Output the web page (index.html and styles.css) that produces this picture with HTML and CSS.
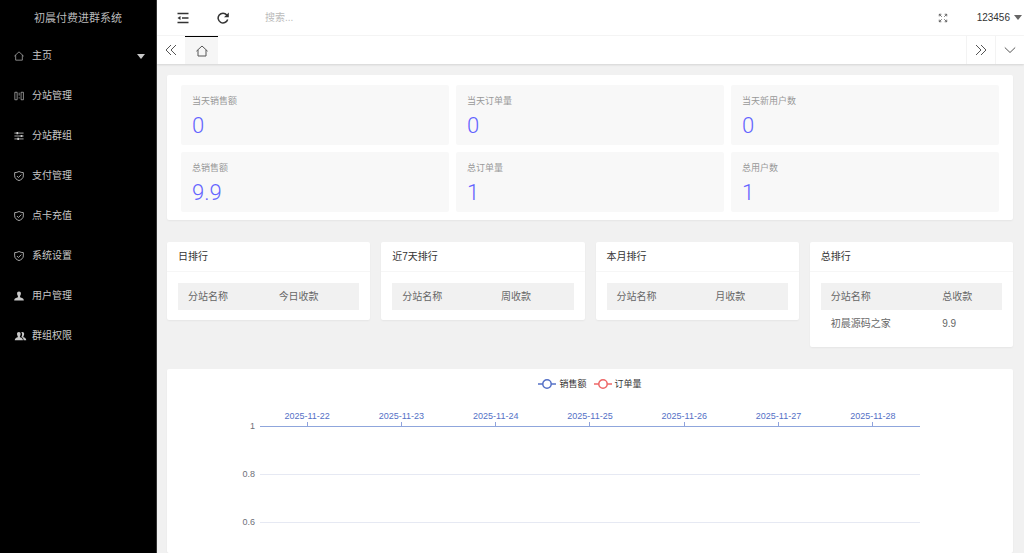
FILE: index.html
```html
<!DOCTYPE html>
<html lang="zh-CN">
<head>
<meta charset="utf-8">
<meta name="viewport" content="width=device-width, initial-scale=1">
<title>初晨付费进群系统</title>
<link rel="stylesheet" href="styles.css">
</head>
<body>
<svg class="defs" aria-hidden="true">
  <symbol id="home" viewBox="0 0 12 12"><path d="M.4 6.200 6 1l5.600 5.200M2 5V11h8V5"/></symbol>
  <symbol id="columns" viewBox="0 0 12 12"><path d="M1 1.500h2.800v9H1zM8.500 1.500h2.800v9H8.500zM6.200 2v3.500M6.200 7.500v1.500"/></symbol>
  <symbol id="sliders" viewBox="0 0 12 12"><path d="M.5 2.500h11M.5 6h11M.5 9.500h11"/><path class="solid" d="M3 1.200h2v2.600H3zM8 4.700h2v2.600H8zM4 8.200h2v2.600H4z"/></symbol>
  <symbol id="shield" viewBox="0 0 12 12"><path d="M6 .6c1.600 1 3.400 1.300 5.200 1.300v4c0 2.700-2.200 4.500-5.200 5.600C3 10.400.8 8.600.8 5.900v-4C2.600 1.900 4.400 1.600 6 .6zM3.500 6l1.800 1.800L8.800 4.300"/></symbol>
  <symbol id="user" viewBox="0 0 12 12"><path class="solid" d="M6 .5c1.600 0 2.300 1.100 2.300 2.500 0 1.300-.6 2.200-1 3v1.600c2 .6 4.500 1 4.500 3.700H.2C.2 8.600 2.700 8.200 4.700 7.600V6c-.4-.8-1-1.700-1-3C3.700 1.600 4.400.5 6 .5z"/></symbol>
  <symbol id="users" viewBox="0 0 14 12"><path class="solid" d="M5 1.200c1.500 0 2.200 1 2.200 2.400 0 1.200-.5 1.900-.9 2.600v1.200c1.700.5 3.600 1.100 3.600 3.800H.1C.1 8.500 2 7.900 3.700 7.400V6.200c-.4-.7-.9-1.400-.9-2.600 0-1.400.7-2.400 2.200-2.400zM8 1.600c.4-.3.800-.4 1.200-.4 1.500 0 2.200 1 2.200 2.400 0 1.200-.5 1.900-.9 2.600v1.200c1.700.5 3.400 1.100 3.400 3.800h-3.200c0-2.400-1-3.300-2.700-4 .5-.8.900-1.600.9-3.200 0-1-.3-1.700-.9-2.400z"/></symbol>
  <symbol id="fold" viewBox="0 0 12 12"><path d="M.5 1.500h11M5 6h6.500M.5 10.500h11"/><path class="solid" d="M3.500 4v4L.5 6z"/></symbol>
  <symbol id="reload" viewBox="0 0 12 12"><path d="M10.700 7.500A4.900 4.900 0 1 1 9.800 2.900"/><path class="solid" d="M11.800.5v4.800H7z"/></symbol>
  <symbol id="expand" viewBox="0 0 12 12"><path d="M1.500 4V1.500H4M1.500 1.500l3 3M8 1.500h2.500V4M10.500 1.500l-3 3M1.500 8v2.500H4M1.500 10.500l3-3M10.500 8v2.500H8M10.500 10.500l-3-3"/></symbol>
  <symbol id="left" viewBox="0 0 12 12"><path d="M6 1 1 6l5 5M11 1 6 6l5 5"/></symbol>
  <symbol id="right" viewBox="0 0 12 12"><path d="m1 1 5 5-5 5M6 1l5 5-5 5"/></symbol>
  <symbol id="down" viewBox="0 0 12 12"><path d="m.8 3.500 5.200 5 5.200-5"/></symbol>
  <symbol id="marker" viewBox="0 0 18 10"><path d="M0 5h18"/><circle cx="9" cy="5" r="4.200"/></symbol>
</svg>
<div class="app">
  <aside class="side">
    <h1 class="brand">初晨付费进群系统</h1>
    <nav class="menu">
      <a href="#"><svg class="icon thin"><use href="#home"/></svg>主页<span class="caret"></span></a>
      <a href="#"><svg class="icon thin"><use href="#columns"/></svg>分站管理</a>
      <a href="#"><svg class="icon"><use href="#sliders"/></svg>分站群组</a>
      <a href="#"><svg class="icon"><use href="#shield"/></svg>支付管理</a>
      <a href="#"><svg class="icon"><use href="#shield"/></svg>点卡充值</a>
      <a href="#"><svg class="icon"><use href="#shield"/></svg>系统设置</a>
      <a href="#"><svg class="icon"><use href="#user"/></svg>用户管理</a>
      <a href="#"><svg class="icon wide"><use href="#users"/></svg>群组权限</a>
    </nav>
  </aside>
  <div class="page">
    <header class="topbar">
      <button class="tool" aria-label="收起菜单"><svg class="icon bold"><use href="#fold"/></svg></button>
      <button class="tool" aria-label="刷新"><svg class="icon bold"><use href="#reload"/></svg></button>
      <input class="search" type="text" placeholder="搜索..." aria-label="搜索">
      <button class="tool expand" aria-label="全屏"><svg class="icon"><use href="#expand"/></svg></button>
      <button class="account">123456<span class="caret"></span></button>
    </header>
    <div class="tabs">
      <button class="tab-btn" aria-label="向左"><svg class="icon"><use href="#left"/></svg></button>
      <button class="tab active" aria-label="主页"><svg class="icon"><use href="#home"/></svg></button>
      <button class="tab-btn edge push" aria-label="向右"><svg class="icon"><use href="#right"/></svg></button>
      <button class="tab-btn edge" aria-label="更多"><svg class="icon"><use href="#down"/></svg></button>
    </div>
    <main class="main">
      <section class="card stats">
        <div class="stat"><h3>当天销售额</h3><p>0</p></div>
        <div class="stat"><h3>当天订单量</h3><p>0</p></div>
        <div class="stat"><h3>当天新用户数</h3><p>0</p></div>
        <div class="stat"><h3>总销售额</h3><p>9.9</p></div>
        <div class="stat"><h3>总订单量</h3><p>1</p></div>
        <div class="stat"><h3>总用户数</h3><p>1</p></div>
      </section>
      <div class="ranks">
        <section class="card rank">
          <h2>日排行</h2>
          <table><thead><tr><th>分站名称</th><th>今日收款</th></tr></thead></table>
        </section>
        <section class="card rank">
          <h2>近7天排行</h2>
          <table><thead><tr><th>分站名称</th><th>周收款</th></tr></thead></table>
        </section>
        <section class="card rank">
          <h2>本月排行</h2>
          <table><thead><tr><th>分站名称</th><th>月收款</th></tr></thead></table>
        </section>
        <section class="card rank">
          <h2>总排行</h2>
          <table><thead><tr><th>分站名称</th><th>总收款</th></tr></thead><tbody><tr><td>初晨源码之家</td><td>9.9</td></tr></tbody></table>
        </section>
      </div>
      <section class="card chart">
        <div class="legend">
          <span class="key sales"><svg class="marker"><use href="#marker"/></svg>销售额</span>
          <span class="key orders"><svg class="marker"><use href="#marker"/></svg>订单量</span>
        </div>
        <div class="dates">
          <span>2025-11-22</span><span>2025-11-23</span><span>2025-11-24</span><span>2025-11-25</span><span>2025-11-26</span><span>2025-11-27</span><span>2025-11-28</span>
        </div>
        <div class="scale">
          <div class="level top"><span>1</span><i></i></div>
          <div class="level"><span>0.8</span><i></i></div>
          <div class="level"><span>0.6</span><i></i></div>
        </div>
      </section>
    </main>
  </div>
</div>
</body>
</html>
```
FILE: styles.css
```css
* { box-sizing: border-box; }
body, h1, h2, h3, p { margin: 0; font-weight: 400; }
body {
  font: 10px/16px "Liberation Sans", "Noto Sans CJK SC", sans-serif;
  color: #333;
  background: #f1f1f1;
}
button, input {
  font: inherit;
  color: inherit;
  border: 0;
  padding: 0;
  background: none;
}
a { color: inherit; text-decoration: none; }
.defs { display: none; }

.icon {
  width: 12px;
  height: 12px;
  flex: none;
  fill: none;
  stroke: currentColor;
  stroke-width: 1;
}
.icon.bold { stroke-width: 1.5; }
.icon.thin { stroke-width: .8; }
.solid { fill: currentColor; stroke: none; }
.caret {
  border: 4px solid transparent;
  border-top: 5px solid currentColor;
  border-bottom: 0;
}

.app { display: flex; height: 100vh; overflow: hidden; }
.side { width: 157px; flex: none; background: #000; color: #c8c8c8; border-right: 1px solid #333; }
.brand { font-size: 11px; line-height: 36px; text-align: center; color: #bbb; }
.menu a {
  display: flex;
  align-items: center;
  gap: 8px;
  height: 40px;
  padding: 0 11px 0 14px;
}
.menu .icon { width: 10px; height: 10px; }
.menu .wide { width: 13px; margin-right: -3px; }
.menu .caret { margin-left: auto; }

.page { flex: 1; min-width: 0; display: flex; flex-direction: column; }
.topbar {
  display: flex;
  align-items: center;
  height: 36px;
  flex: none;
  padding: 0 2px 0 6px;
  background: #fff;
  border-bottom: 1px solid #f6f6f6;
}
.tool { width: 40px; height: 36px; display: grid; place-items: center; }
.search { flex: 1; min-width: 0; height: 36px; margin-left: 22px; outline: 0; }
.search::placeholder { color: #bbb; opacity: 1; }
.expand { color: #555; }
.expand .icon { width: 10px; height: 10px; }
.account { display: flex; align-items: center; gap: 4px; margin-left: 14px; }
.account .caret { color: #666; }

.tabs {
  display: flex;
  flex: none;
  height: 28px;
  margin-bottom: 1px;
  background: #fff;
  box-shadow: 0 1px 2px rgba(0, 0, 0, .12);
  color: #555;
}
.tabs button { display: grid; place-items: center; }
.tab-btn { width: 28px; }
.tab { width: 33px; }
.tab.active { background: #f6f6f6; border-top: 1px solid #000; }
.push { margin-left: auto; }
.tabs .edge { width: 29px; border-left: 1px solid #f3f3f3; }

.main { flex: 1; min-height: 0; display: flex; flex-direction: column; padding: 10px 11px 0 10px; }
.card { flex: none; background: #fff; border-radius: 2px; box-shadow: 0 1px 2px rgba(0, 0, 0, .05); }
.stats { display: grid; grid-template-columns: repeat(3, 1fr); gap: 7px; padding: 10px 14px 8px; }
.stat { padding: 8px 11px 2px; background: #f8f8f8; border-radius: 2px; }
.stat h3 { font-size: 9px; line-height: 16px; color: #999; }
.stat p { font: 300 22px/34px Roboto, "Liberation Sans", sans-serif; color: #6464ff; }

.ranks {
  display: grid;
  grid-template-columns: repeat(4, 1fr);
  align-items: start;
  gap: 11px;
  margin: 22px 0;
}
.rank { padding-bottom: 10px; }
.rank h2 { font-size: 10px; line-height: 29px; padding: 0 11px; border-bottom: 1px solid #f6f6f6; }
.rank table { width: calc(100% - 22px); margin: 11px 11px 0; border-collapse: collapse; color: #666; }
.rank th, .rank td { padding: 0 10px; height: 27px; font-weight: 400; text-align: left; }
.rank th { background: #f1f1f1; }

.chart { flex: 1; min-height: 0; overflow: hidden; padding-top: 9px; font-size: 9px; line-height: 11px; }
.legend { display: flex; justify-content: center; gap: 7px; line-height: 12px; }
.key { display: flex; align-items: center; gap: 3px; }
.marker { width: 18px; height: 10px; fill: #fff; stroke-width: 1.5; }
.sales .marker { stroke: #5470c6; }
.orders .marker { stroke: #ee6666; }
.dates {
  display: grid;
  grid-template-columns: repeat(7, 1fr);
  margin: 21px 11% 0;
  color: #5470c6;
}
.dates span { display: flex; flex-direction: column; align-items: center; }
.dates span::after { content: ""; width: 1px; height: 4px; background: #8fa2dc; }
.scale { display: grid; gap: 37px; margin-top: -5px; color: #6e7079; }
.level { display: grid; grid-template-columns: 11fr 78fr; align-items: center; padding-right: 11%; }
.level span { text-align: right; padding-right: 5px; }
.level i { height: 1px; background: #e6e9f3; }
.level.top i { background: #8fa6dc; }
```
